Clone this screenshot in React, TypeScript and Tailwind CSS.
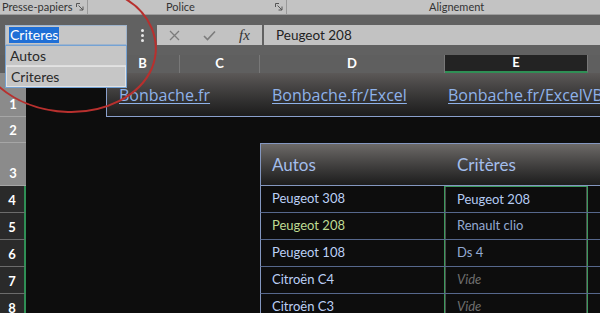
import React from 'react'

const rowHeads = [
  { n: '1', h: 'h-[44px]', sel: false },
  { n: '2', h: 'h-[26px]', sel: false },
  { n: '3', h: 'h-[43px]', sel: false },
  { n: '4', h: 'h-[27px]', sel: true },
  { n: '5', h: 'h-[27px]', sel: true },
  { n: '6', h: 'h-[27px]', sel: true },
  { n: '7', h: 'h-[27px]', sel: true },
  { n: '8', h: 'h-[27px]', sel: true },
]

const rows = [
  { auto: 'Peugeot 308', autoCls: 'text-[#bcd0f6]', crit: 'Peugeot 208', critCls: 'text-[#b4caf2]' },
  { auto: 'Peugeot 208', autoCls: 'text-[#bfdb93]', crit: 'Renault clio', critCls: 'text-[#93a9d2]' },
  { auto: 'Peugeot 108', autoCls: 'text-[#bcd0f6]', crit: 'Ds 4', critCls: 'text-[#93a9d2]' },
  { auto: 'Citroën C4', autoCls: 'text-[#bcd0f6]', crit: 'Vide', critCls: 'text-[#6f6f6f] italic' },
  { auto: 'Citroën C3', autoCls: 'text-[#bcd0f6]', crit: 'Vide', critCls: 'text-[#6f6f6f] italic' },
]

function Launcher() {
  return (
    <svg width="8" height="8" viewBox="0 0 8 8" className="shrink-0">
      <path d="M0.5 4V0.5H4" fill="none" stroke="#555" strokeWidth="1" />
      <path d="M2.5 2.5L7 7M7 3.5V7H3.5" fill="none" stroke="#555" strokeWidth="1" />
    </svg>
  )
}

function ColHead({ w, label, active }: { w: string; label: string; active?: boolean }) {
  return (
    <div
      className={`${w} shrink-0 h-full flex items-center justify-center text-[13px] font-bold border-r border-[#787878] ${
        active ? 'bg-[#232323] border-b-2 border-b-[#2f8f55] text-white' : 'text-white'
      }`}
    >
      {label}
    </div>
  )
}

export default function App() {
  return (
    <div className="relative w-[600px] h-[313px] overflow-hidden bg-[#0d0d0d] font-['Lato','Liberation_Sans',sans-serif]">
      {/* ruban */}
      <div className="h-[15px] bg-[#c3c3c3] border-b border-[#9c9c9c] flex items-center text-[11px] text-[#333]">
        <div className="w-[88px] h-full flex items-center justify-between pl-[2px] pr-[3px] border-r border-[#9a9a9a]">
          <span>Presse-papiers</span>
          <Launcher />
        </div>
        <div className="w-[199px] h-full flex items-center justify-between pl-[78px] pr-[3px] border-r border-[#9a9a9a]">
          <span>Police</span>
          <Launcher />
        </div>
        <div className="flex-1 h-full flex items-center pl-[142px]">
          <span>Alignement</span>
        </div>
      </div>

      {/* barre de formule */}
      <div className="h-[40px] bg-[#616161] flex items-start pt-[10px]">
        <div className="relative ml-[5px] w-[122px] h-[20px] z-10">
          <div className="h-full bg-[#c6c6c6] border border-[#9fb4cc] flex items-center pl-[3px] text-[14px]">
            <span className="bg-[#1f6fd6] text-white leading-[16px] px-[1px]">Criteres</span>
          </div>
          <div className="absolute left-0 top-full w-full bg-[#c6c6c6] border border-[#74a2d4] text-[14px] text-[#2a2a2a]">
            <div className="h-[20px] flex items-center pl-[4px] border-b border-[#dedede]">Autos</div>
            <div className="h-[21px] flex items-center pl-[4px] border border-[#e2e2e2]">Criteres</div>
          </div>
        </div>
        <div className="w-[30px] h-[20px] flex flex-col items-center justify-center gap-[2px]">
          <span className="w-[3px] h-[3px] bg-[#e6e6e6] rounded-full" />
          <span className="w-[3px] h-[3px] bg-[#e6e6e6] rounded-full" />
          <span className="w-[3px] h-[3px] bg-[#e6e6e6] rounded-full" />
        </div>
        <div className="w-[105px] h-[20px] bg-[#c2c2c2] flex items-center">
          <div className="w-[34px] flex justify-center">
            <svg width="11" height="11" viewBox="0 0 11 11">
              <path d="M1 1L10 10M10 1L1 10" stroke="#7c7c7c" strokeWidth="1.3" />
            </svg>
          </div>
          <div className="w-[36px] flex justify-center">
            <svg width="13" height="11" viewBox="0 0 13 11">
              <path d="M1 6L4.5 9.5L12 1.5" fill="none" stroke="#7c7c7c" strokeWidth="1.6" />
            </svg>
          </div>
          <div className="w-[35px] flex justify-center text-[15px] italic text-[#333] font-['Liberation_Serif',serif]">
            fx
          </div>
        </div>
        <div className="ml-[2px] flex-1 h-[20px] bg-[#c2c2c2] flex items-center pl-[12px] text-[13.5px] text-[#222]">
          Peugeot 208
        </div>
      </div>

      {/* en-têtes de colonnes */}
      <div className="h-[18px] bg-[#5f5f5f] flex">
        <div className="w-[26px] shrink-0 h-full border-r border-[#787878]" />
        <ColHead w="w-[80px]" label="A" />
        <ColHead w="w-[74px]" label="B" />
        <ColHead w="w-[80px]" label="C" />
        <ColHead w="w-[185px]" label="D" />
        <ColHead w="w-[143px]" label="E" active />
        <ColHead w="w-[120px]" label="F" />
      </div>

      {/* grille */}
      <div className="flex">
        <div className="w-[26px] shrink-0 flex flex-col">
          {rowHeads.map((r) => (
            <div
              key={r.n}
              className={`${r.h} shrink-0 flex items-end justify-center pb-[2px] text-[13px] font-bold text-white border-b ${
                r.sel
                  ? 'bg-[#2a2a2a] border-[#6c6c6c] border-r-2 border-r-[#2f8f55]'
                  : 'bg-[#8b8b8b] border-[#a6a6a6]'
              }`}
            >
              {r.n}
            </div>
          ))}
        </div>

        <div className="flex-1 flex flex-col">
          {/* ligne 1 : liens */}
          <div className="ml-[80px] h-[44px] border border-t-0 border-[#8aa0cc] bg-gradient-to-b from-[#5c5958] to-[#1c1c1c] flex items-end pb-[9px] pl-[12px] text-[16px] text-[#8fb2ea] whitespace-nowrap font-['Open_Sans',sans-serif]">
            <span className="w-[153px] shrink-0"><span className="underline underline-offset-2">Bonbache.fr</span></span>
            <span className="w-[176px] shrink-0"><span className="underline underline-offset-2">Bonbache.fr/Excel</span></span>
            <span className="underline underline-offset-2">Bonbache.fr/ExcelVBA</span>
          </div>

          {/* ligne 2 */}
          <div className="h-[26px]" />

          {/* tableau */}
          <div className="ml-[234px] w-[400px] shrink-0">
            <div className="h-[43px] border border-[#8497c0] bg-gradient-to-b from-[#6d6a68] to-[#1d1d1d] flex items-center text-[17px] text-[#a4beec]">
              <div className="w-[183px] pl-[11px]">Autos</div>
              <div className="pl-[13px]">Critères</div>
            </div>
            {rows.map((r, i) => (
              <div key={i} className="h-[27px] flex border-b border-[#56678c] border-l border-l-[#8497c0] text-[13px]">
                <div className={`w-[183px] flex items-center pl-[11px] ${r.autoCls}`}>{r.auto}</div>
                <div
                  className={`w-[144px] flex items-center border-x border-[#3c9a5e] ${i === 0 ? 'border-t' : ''}`}
                >
                  <div className={`h-full flex-1 flex items-center pl-[11px] border-x border-[#4a4a4a] ${r.critCls}`}>
                    {r.crit}
                  </div>
                </div>
                <div className="flex-1" />
              </div>
            ))}
          </div>
        </div>
      </div>

      {/* cercle rouge */}
      <svg className="absolute left-0 top-0 pointer-events-none z-20" width="200" height="125" viewBox="0 0 200 125">
        <path
          d="M124 -2 C149 12 163 40 152 68 C140 96 105 113 68 112 C38 111 12 100 -6 82"
          fill="none"
          stroke="#b8302e"
          strokeWidth="2"
        />
      </svg>
    </div>
  )
}
